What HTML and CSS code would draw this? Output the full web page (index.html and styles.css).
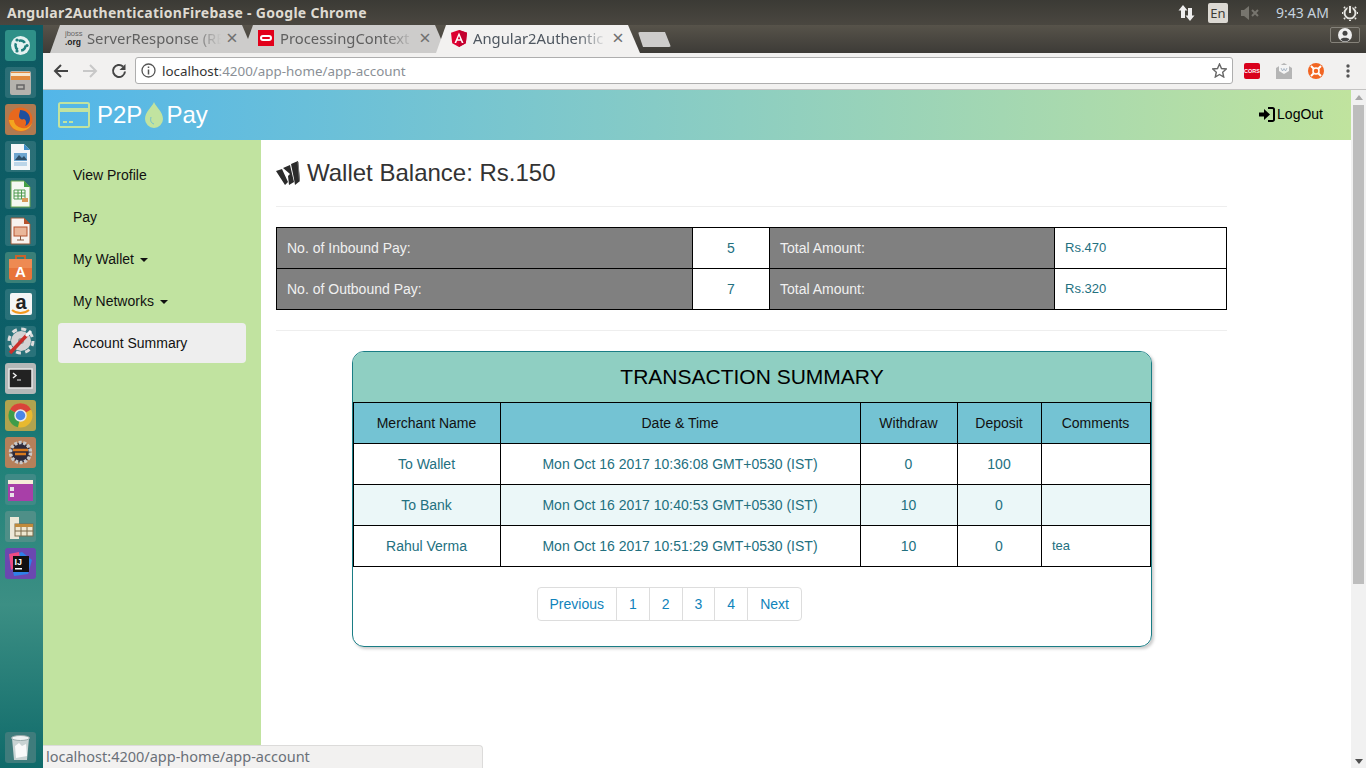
FILE: index.html
```html
<!DOCTYPE html>
<html lang="en">

<head>
    <meta charset="UTF-8">
    <meta name="viewport" content="width=device-width, initial-scale=1.0">
    <title>Angular2AuthenticationFirebase</title>
    <link rel="stylesheet" href="styles.css">
</head>

<body>
    <div class="top-panel">
        <span class="window-title">Angular2AuthenticationFirebase - Google Chrome</span>
        <div class="indicators">
            <svg class="ind-arrows" width="17" height="18" viewBox="0 0 17 18"><path d="M5 1l4.500 5.500H7V14H3V6.500H.5zM12 17l-4.500-5.500H10V4h4v7.500h2.500z" fill="#eee"/></svg>
            <span class="ind-lang">En</span>
            <svg class="ind-sound" width="18" height="14" viewBox="0 0 18 14"><path d="M0 4h3l5-4v14l-5-4H0z" fill="#77756e"/><path d="M11 4l6 6M17 4l-6 6" stroke="#77756e" stroke-width="2"/></svg>
            <span class="ind-time">9:43 AM</span>
            <svg class="ind-power" width="16" height="16" viewBox="0 0 16 16"><circle cx="8" cy="8" r="5.500" fill="none" stroke="#e6e6e2" stroke-width="2"/><path d="M8 0v8" stroke="#4a4740" stroke-width="5"/><path d="M8 1v7" stroke="#e6e6e2" stroke-width="2"/><path d="M1 8H0M16 8h-1M3 3L2 2M13 3l1-1M3 13l-1 1M13 13l1 1M8 16v-1" stroke="#e6e6e2" stroke-width="2"/></svg>
        </div>
    </div>

    <div class="desktop">
        <nav class="launcher">
            <div class="tile tile-home"><svg viewBox="0 0 31 31"><circle cx="15.500" cy="15.500" r="9.500" fill="#e4f1f0"/><circle cx="15.500" cy="15.500" r="5" fill="none" stroke="#1f7f7c" stroke-width="2.500" stroke-dasharray="7 3.500"/><circle cx="22" cy="15.500" r="1.600" fill="#1f7f7c"/><circle cx="12" cy="10" r="1.600" fill="#1f7f7c"/><circle cx="12" cy="21" r="1.600" fill="#1f7f7c"/></svg></div>
            <div class="tile tile-files"><svg viewBox="0 0 31 31"><rect x="5" y="4" width="21" height="24" rx="2" fill="#b4b2ad"/><rect x="6" y="5" width="19" height="8" fill="#e28b3d"/><rect x="6" y="6" width="19" height="3" fill="#f5e7cf"/><rect x="12" y="18" width="7" height="4" fill="none" stroke="#666" stroke-width="1.500"/></svg></div>
            <div class="tile tile-firefox"><svg viewBox="0 0 31 31"><circle cx="15.500" cy="15.500" r="12" fill="#e8681d"/><path d="M15 6c6 0 10 4 10 9 0 3-2 6-5 7 2-3 1-6-1-7-2 1-5 0-5-3 0-2 1-4 1-6z" fill="#1f4f9e"/><path d="M4 16c1 7 6 11 12 11s10-4 11-8c-2 4-6 6-10 5-5-1-8-4-8-8z" fill="#f4a51f"/></svg></div>
            <div class="tile tile-doc"><svg viewBox="0 0 31 31"><path d="M6 3h13l6 6v20H6z" fill="#f4f6f8"/><path d="M19 3l6 6h-6z" fill="#3f8fc9"/><rect x="9" y="12" width="13" height="8" fill="#6fa6cf"/><path d="M10 19l4-5 3 3 2-2 3 4z" fill="#2f4f66"/><rect x="9" y="21" width="13" height="4" fill="#bcd5e8"/></svg></div>
            <div class="tile tile-doc"><svg viewBox="0 0 31 31"><path d="M6 3h13l6 6v20H6z" fill="#f4f8f2" stroke="#6aa84f"/><path d="M19 3l6 6h-6z" fill="#43a047"/><path d="M9 12h11v9H9zM9 15h11M9 18h11M13 12v9M16.500 12v9" fill="none" stroke="#4f9a4f"/><rect x="17" y="20" width="6" height="4" fill="#d89a5b"/></svg></div>
            <div class="tile tile-doc"><svg viewBox="0 0 31 31"><path d="M6 3h13l6 6v20H6z" fill="#f8f2ee" stroke="#9a5a3a"/><path d="M19 3l6 6h-6z" fill="#b5532e"/><rect x="9" y="12" width="13" height="9" fill="#eab79a" stroke="#b5532e"/><path d="M15.500 21v4M12 25h7" stroke="#8a5a40"/></svg></div>
            <div class="tile tile-store"><svg viewBox="0 0 31 31"><path d="M11 7V4h9v3" fill="none" stroke="#c9622a" stroke-width="2"/><rect x="4" y="7" width="23" height="21" rx="2" fill="#e8743a"/><rect x="4" y="7" width="23" height="9" fill="#ee8a52"/><text x="15.500" y="25" class="tile-letter" fill="#fff">A</text></svg></div>
            <div class="tile tile-amazon"><svg viewBox="0 0 31 31"><rect x="5" y="4" width="22" height="22" rx="2" fill="#f5f5f5"/><text x="16" y="20" class="tile-letter-a" fill="#222">a</text><path d="M7 21c5 4 12 4 17 0" fill="none" stroke="#f39a1f" stroke-width="2"/></svg></div>
            <div class="tile tile-settings"><svg viewBox="0 0 31 31"><circle cx="16" cy="15" r="10" fill="#d4d4d4"/><circle cx="16" cy="15" r="12" fill="none" stroke="#dcdcdc" stroke-width="3" stroke-dasharray="5 4.400"/><circle cx="16" cy="15" r="3" fill="#8a9a9a"/><path d="M5 27L22 9" stroke="#c9302c" stroke-width="3.500"/><path d="M21 10l5-5" stroke="#f4f4f4" stroke-width="3"/></svg></div>
            <div class="tile tile-terminal"><svg viewBox="0 0 31 31"><rect x="4" y="6" width="23" height="19" fill="#222" stroke="#e8e8e8" stroke-width="1.500"/><path d="M8 10l3 2.500-3 2.500" fill="none" stroke="#eee" stroke-width="1.500"/><path d="M12 17h4" stroke="#aaa" stroke-width="1.500"/></svg></div>
            <div class="tile tile-chrome"><svg viewBox="0 0 31 31"><circle cx="15.500" cy="15.500" r="12" fill="#e8b92f"/><path d="M15.500 15.500L5 9.500A12 12 0 0 1 26 9.500z" fill="#d9433a"/><path d="M15.500 15.500L5 9.500A12 12 0 0 0 13 27.300z" fill="#3d9c4a"/><circle cx="15.500" cy="15.500" r="5.500" fill="#4a86e8" stroke="#e8e8e8" stroke-width="1.500"/></svg></div>
            <div class="tile tile-ide"><svg viewBox="0 0 31 31"><circle cx="15.500" cy="15.500" r="10" fill="#2e2a3a" stroke="#c8c8c8" stroke-width="3.500" stroke-dasharray="3 1.500"/><path d="M8 13h15M10 17h11" stroke="#d97a1e" stroke-width="2.500"/></svg></div>
            <div class="tile tile-window"><svg viewBox="0 0 31 31"><rect x="3" y="6" width="25" height="21" fill="#a83fa8"/><rect x="3" y="6" width="25" height="4" fill="#f5ecd8"/><rect x="5" y="13" width="4" height="4" fill="#e8e0e8"/><rect x="5" y="19" width="4" height="4" fill="#e8e0e8"/></svg></div>
            <div class="tile tile-table"><svg viewBox="0 0 31 31"><rect x="5" y="6" width="9" height="22" fill="#ece8d8"/><rect x="10" y="13" width="18" height="12" fill="#efe7d0" stroke="#7a6a4a"/><rect x="10" y="13" width="18" height="3" fill="#c08a3a"/><path d="M16 16v9M22 16v9M10 20h18" stroke="#7a6a4a"/></svg></div>
            <div class="tile tile-idea"><svg viewBox="0 0 31 31"><path d="M5 8l12-4 10 8-4 14-14 2z" fill="#2f7fe8"/><path d="M4 6l10-2 2 12-10 6z" fill="#ee4a84"/><rect x="8" y="8" width="16" height="16" fill="#111"/><text x="9.500" y="17" class="tile-ij" fill="#fff">IJ</text><rect x="10" y="20" width="7" height="1.500" fill="#fff"/></svg></div>
            <div class="launcher-spacer"></div>
            <div class="tile tile-trash"><svg viewBox="0 0 31 31"><path d="M7 6h17l-2 22H9z" fill="#c9d3d3"/><ellipse cx="15.500" cy="6" rx="9" ry="2.500" fill="#eef2f2" stroke="#9aa"/><path d="M10 14l4-3 3 3 4-2 1 12-11 2z" fill="#fafafa"/></svg></div>
        </nav>

        <div class="window">
            <div class="tabstrip">
                <div class="tab tab-first">
                    <span class="favicon favicon-jboss">jboss<b>.org</b></span>
                    <span class="tab-title">ServerResponse (RE</span>
                    <span class="tab-close">×</span>
                </div>
                <div class="tab tab-second">
                    <span class="favicon favicon-oracle"><i></i></span>
                    <span class="tab-title">ProcessingContext</span>
                    <span class="tab-close">×</span>
                </div>
                <div class="tab tab-active">
                    <svg class="favicon" width="16" height="17" viewBox="0 0 16 17"><path d="M8 0l8 2.800-1.200 10.500L8 17l-6.800-3.700L0 2.800z" fill="#dd0031"/><path d="M8 0l8 2.800-1.200 10.500L8 17z" fill="#c3002f"/><path d="M8 2.500L3.500 13h1.700l.9-2.300h3.800l.9 2.300h1.700zM8 6l1.300 3.300H6.700z" fill="#fff"/></svg>
                    <span class="tab-title">Angular2Authentic</span>
                    <span class="tab-close">×</span>
                </div>
                <div class="new-tab"></div>
                <div class="avatar-btn">
                    <svg width="14" height="14" viewBox="0 0 14 14"><circle cx="7" cy="7" r="7" fill="#eee"/><circle cx="7" cy="5.200" r="2.500" fill="#444"/><path d="M2.500 11.500c1-2.500 8-2.500 9 0a6 6 0 0 1-9 0z" fill="#444"/></svg>
                </div>
            </div>

            <div class="toolbar">
                <svg class="tool-btn" width="16" height="16" viewBox="0 0 16 16"><path d="M15 8H2M8 2L2 8l6 6" fill="none" stroke="#444" stroke-width="2"/></svg>
                <svg class="tool-btn" width="16" height="16" viewBox="0 0 16 16"><path d="M1 8h13M8 2l6 6-6 6" fill="none" stroke="#c8c8c8" stroke-width="2"/></svg>
                <svg class="tool-btn" width="16" height="16" viewBox="0 0 16 16"><path d="M14 8.500A6 6 0 1 1 12 3.500" fill="none" stroke="#444" stroke-width="2"/><path d="M14.500 1v6h-6z" fill="#444"/></svg>
                <div class="omnibox">
                    <svg width="15" height="15" viewBox="0 0 15 15"><circle cx="7.500" cy="7.500" r="6.500" fill="none" stroke="#555" stroke-width="1.300"/><path d="M7.500 6.500v5M7.500 3.500v1.500" stroke="#555" stroke-width="1.500"/></svg>
                    <span class="url"><span class="url-host">localhost</span>:4200/app-home/app-account</span>
                    <svg class="star" width="15" height="15" viewBox="0 0 15 15"><path d="M7.500 1l2 4.500 4.800.5-3.600 3.200 1 4.800-4.200-2.500L3.300 14l1-4.800L.7 6l4.800-.5z" fill="none" stroke="#666" stroke-width="1.400"/></svg>
                </div>
                <div class="extensions">
                    <span class="ext-cors">CORS</span>
                    <svg width="16" height="16" viewBox="0 0 16 16"><path d="M0 5l8-5 8 5v11H0z" fill="#b5b5b5"/><path d="M3 2h10v6l-5 3-5-3z" fill="#f4f4f4"/><path d="M5 5l1.500 3L8 5.500 9.500 8 11 5" fill="none" stroke="#9ab" stroke-width=".8"/></svg>
                    <svg width="16" height="16" viewBox="0 0 16 16"><circle cx="8" cy="8" r="8" fill="#f26522"/><circle cx="8" cy="8" r="3" fill="none" stroke="#fff" stroke-width="1.500"/><path d="M3 3l2.500 2.500M13 3l-2.500 2.500M3 13l2.500-2.500M13 13l-2.500-2.500" stroke="#fff" stroke-width="2"/></svg>
                    <svg class="ext-menu" width="4" height="14" viewBox="0 0 4 14"><circle cx="2" cy="2" r="1.700" fill="#555"/><circle cx="2" cy="7" r="1.700" fill="#555"/><circle cx="2" cy="12" r="1.700" fill="#555"/></svg>
                </div>
            </div>

            <div class="viewport">
                <div class="page">
                    <header class="navbar">
                        <div class="brand">
                            <svg width="32" height="26" viewBox="0 0 32 26"><rect x="1" y="1" width="30" height="24" rx="1.500" fill="none" stroke="#c1e3a0" stroke-width="2"/><rect x="1" y="6" width="30" height="4" fill="#c1e3a0"/><path d="M5 20h4M11 20h4" stroke="#c1e3a0" stroke-width="2"/></svg>
                            <span class="brand-p2p">P2P</span>
                            <svg width="18" height="27" viewBox="0 0 18 27"><path d="M9 0c2 5 9 10 9 17a9 9 0 0 1-18 0C0 10 7 5 9 0z" fill="#c1e3a0"/><path d="M6 15c-1 4 0 6 3 7" fill="none" stroke="#6fbfd0" stroke-width="1"/></svg>
                            <span class="brand-pay">Pay</span>
                        </div>
                        <a class="logout">
                            <svg width="16" height="15" viewBox="0 0 16 15"><path d="M9 1h4.500A1.500 1.500 0 0 1 15 2.500v10a1.500 1.500 0 0 1-1.500 1.500H9" fill="none" stroke="#000" stroke-width="2"/><path d="M0 5.500h5V2l6 5.500L5 13V9.500H0z" fill="#000"/></svg>
                            <span>LogOut</span>
                        </a>
                    </header>

                    <div class="page-body">
                        <aside class="sidebar">
                            <ul class="side-nav">
                                <li>View Profile</li>
                                <li>Pay</li>
                                <li>My Wallet <span class="caret"></span></li>
                                <li>My Networks <span class="caret"></span></li>
                                <li class="active">Account Summary</li>
                            </ul>
                        </aside>

                        <main class="content">
                            <h3 class="balance">
                                <svg width="24" height="24" viewBox="0 0 24 24"><path d="M0 10l6-2 6 13-3 3zM7 7l7-3 4 17-5 3-1-9 2-2zM15 3l7-3 2 20-5 4-1-6z" fill="#2b2b2b"/><path d="M22 1l1.500 19" stroke="#777" stroke-width="1"/></svg>
                                Wallet Balance: Rs.150
                            </h3>
                            <hr>
                            <table class="stats">
                                <colgroup>
                                    <col class="stat-a"><col class="stat-b"><col class="stat-c"><col class="stat-d">
                                </colgroup>
                                <tr>
                                    <th>No. of Inbound Pay:</th>
                                    <td class="stat-count">5</td>
                                    <th>Total Amount:</th>
                                    <td class="stat-amount">Rs.470</td>
                                </tr>
                                <tr>
                                    <th>No. of Outbound Pay:</th>
                                    <td class="stat-count">7</td>
                                    <th>Total Amount:</th>
                                    <td class="stat-amount">Rs.320</td>
                                </tr>
                            </table>
                            <hr>

                            <section class="summary">
                                <h4 class="summary-title">TRANSACTION SUMMARY</h4>
                                <table class="tx">
                                    <colgroup>
                                        <col class="tx-a"><col class="tx-b"><col class="tx-c"><col class="tx-d"><col class="tx-e">
                                    </colgroup>
                                    <thead>
                                        <tr>
                                            <th>Merchant Name</th>
                                            <th>Date &amp; Time</th>
                                            <th>Withdraw</th>
                                            <th>Deposit</th>
                                            <th>Comments</th>
                                        </tr>
                                    </thead>
                                    <tbody>
                                        <tr>
                                            <td>To Wallet</td>
                                            <td>Mon Oct 16 2017 10:36:08 GMT+0530 (IST)</td>
                                            <td>0</td>
                                            <td>100</td>
                                            <td class="tx-comment"></td>
                                        </tr>
                                        <tr class="odd">
                                            <td>To Bank</td>
                                            <td>Mon Oct 16 2017 10:40:53 GMT+0530 (IST)</td>
                                            <td>10</td>
                                            <td>0</td>
                                            <td class="tx-comment"></td>
                                        </tr>
                                        <tr>
                                            <td>Rahul Verma</td>
                                            <td>Mon Oct 16 2017 10:51:29 GMT+0530 (IST)</td>
                                            <td>10</td>
                                            <td>0</td>
                                            <td class="tx-comment">tea</td>
                                        </tr>
                                    </tbody>
                                </table>
                                <ul class="pagination">
                                    <li>Previous</li>
                                    <li>1</li>
                                    <li>2</li>
                                    <li>3</li>
                                    <li>4</li>
                                    <li>Next</li>
                                </ul>
                            </section>
                        </main>
                    </div>
                </div>

                <div class="scrollbar">
                    <span class="arrow-up"></span>
                    <div class="thumb"></div>
                    <span class="arrow-down"></span>
                </div>

                <div class="status-bubble">localhost:4200/app-home/app-account</div>
            </div>
        </div>
    </div>
</body>

</html>
```

FILE: styles.css
```css
html, body {
    margin: 0;
    height: 100%;
    overflow: hidden;
}

body {
    font-family: "Liberation Sans", Arial, sans-serif;
    font-size: 14px;
    color: #333;
    display: flex;
    flex-direction: column;
    background-color: #fff;
}

/* ubuntu top panel */
.top-panel {
    height: 25px;
    flex: none;
    display: flex;
    align-items: center;
    justify-content: space-between;
    background: linear-gradient(#3b3a35, #4a4740);
    font-family: "Noto Sans", sans-serif;
}

.window-title {
    margin-left: 7px;
    font-size: 14px;
    font-weight: 700;
    letter-spacing: 0.28px;
    color: #dfdbd2;
}

.indicators {
    display: flex;
    align-items: center;
}

.ind-arrows {
    margin-right: 13px;
}

.ind-lang {
    width: 20px;
    height: 20px;
    margin-right: 13px;
    border-radius: 2px;
    background-color: #dcd9d3;
    color: #3c3b37;
    font-size: 13px;
    line-height: 20px;
    text-align: center;
}

.ind-sound {
    margin-right: 17px;
}

.ind-time {
    margin-right: 13px;
    font-size: 14px;
    color: #c6d2de;
}

.ind-power {
    margin-right: 8px;
}

.desktop {
    flex: 1;
    min-height: 0;
    display: flex;
}

/* launcher */
.launcher {
    width: 43px;
    flex: none;
    box-sizing: border-box;
    padding: 5px 0 5px 5px;
    display: flex;
    flex-direction: column;
    gap: 6px;
    background: linear-gradient(#0e5a62 0%, #0c5f68 45%, #1f8078 58%, #3c8f84 78%, #0f6a6a 100%);
}

.launcher-spacer {
    flex: 1;
}

.tile {
    width: 31px;
    height: 31px;
    border-radius: 3px;
    background-color: rgba(255, 255, 255, 0.12);
}

.tile svg {
    display: block;
    width: 31px;
    height: 31px;
}

.tile-home {
    background-color: #2f9088;
}

.tile-firefox {
    background-color: #b07a50;
}

.tile-store {
    background-color: #3a8078;
}

.tile-terminal {
    background-color: #b5b8b8;
}

.tile-chrome {
    background-color: #b0a34f;
}

.tile-ide {
    background-color: #b5805a;
}

.tile-window {
    background-color: #3f8a86;
}

.tile-table {
    background-color: #4f8f88;
}

.tile-idea {
    background-color: #6a48b0;
}

.tile-trash {
    background-color: #3f7c7c;
}

.tile-letter {
    font-family: "Liberation Sans", sans-serif;
    font-size: 15px;
    font-weight: 700;
    text-anchor: middle;
}

.tile-letter-a {
    font-family: "Liberation Sans", sans-serif;
    font-size: 20px;
    font-weight: 700;
    text-anchor: middle;
}

.tile-ij {
    font-family: "Liberation Sans", sans-serif;
    font-size: 9px;
    font-weight: 700;
}

/* chrome */
.window {
    flex: 1;
    min-width: 0;
    display: flex;
    flex-direction: column;
    font-family: "Noto Sans", sans-serif;
}

.tabstrip {
    height: 28px;
    flex: none;
    padding-left: 7px;
    display: flex;
    align-items: flex-end;
    background: linear-gradient(#57534a, #3d3b37);
}

.tab {
    width: 204px;
    height: 28px;
    flex: none;
    box-sizing: border-box;
    margin-right: -11px;
    padding: 0 14px 2px 15px;
    display: flex;
    align-items: center;
    background-color: #cdcccb;
    clip-path: polygon(0 100%, 10px 0, 192px 0, 100% 100%);
    position: relative;
}

.tab-first {
    z-index: 2;
}

.tab-second {
    z-index: 1;
}

.tab-active {
    z-index: 3;
    background-color: #f2f1f0;
}

.favicon {
    flex: none;
    width: 16px;
    margin-right: 6px;
}

.favicon-jboss {
    font-family: "Liberation Sans", sans-serif;
    font-size: 7.500px;
    line-height: 8px;
    color: #666;
    text-align: center;
}

.favicon-jboss b {
    display: block;
    font-size: 8.500px;
    color: #222;
}

.favicon-oracle {
    height: 16px;
    background-color: #e2001a;
    display: flex;
    align-items: center;
    justify-content: center;
}

.favicon-oracle i {
    width: 12px;
    height: 6px;
    box-sizing: border-box;
    border: 2px solid #fff;
    border-radius: 3px;
}

.tab-title {
    flex: 1;
    min-width: 0;
    white-space: nowrap;
    font-size: 14.800px;
    color: #5f5f5f;
    -webkit-mask-image: linear-gradient(to right, #000 76%, transparent 98%);
    mask-image: linear-gradient(to right, #000 76%, transparent 98%);
}

.tab-active .tab-title {
    color: #4f5760;
}

.tab-close {
    flex: none;
    width: 16px;
    font-size: 20px;
    line-height: 20px;
    text-align: center;
    color: #707070;
}

.new-tab {
    width: 33px;
    height: 15px;
    flex: none;
    margin: 0 0 6px 9px;
    background-color: #cdcccb;
    clip-path: polygon(0 0, 27px 0, 100% 100%, 5px 100%);
    border-radius: 2px;
}

.avatar-btn {
    width: 30px;
    height: 16px;
    box-sizing: border-box;
    margin: 0 6px 10px auto;
    border: 1px solid #85827a;
    border-radius: 2px;
    display: flex;
    align-items: center;
    justify-content: center;
}

.toolbar {
    height: 37px;
    flex: none;
    box-sizing: border-box;
    padding: 0 0 1px 10px;
    display: flex;
    align-items: center;
    background-color: #f2f1f0;
    border-bottom: 1px solid #c4c3c2;
}

.tool-btn {
    flex: none;
    margin-right: 13px;
}

.tool-btn + .omnibox {
    margin-left: -5px;
}

.omnibox {
    width: 1098px;
    height: 27px;
    flex: none;
    box-sizing: border-box;
    padding: 0 5px;
    display: flex;
    align-items: center;
    background-color: #fff;
    border: 1px solid #aeaeae;
    border-radius: 3px;
}

.url {
    flex: 1;
    margin-left: 6px;
    font-size: 13.400px;
    color: #8a8f96;
}

.url-host {
    color: #333;
}

.star {
    margin-right: 0;
}

.extensions {
    flex: 1;
    margin-left: 11px;
    display: flex;
    align-items: center;
    gap: 16px;
}

.ext-cors {
    width: 16px;
    height: 16px;
    border-radius: 2px;
    background-color: #d9001b;
    color: #fff;
    font-family: "Liberation Sans", sans-serif;
    font-size: 5.500px;
    font-weight: 700;
    line-height: 16px;
    text-align: center;
}

.ext-menu {
    margin-left: 6px;
}

.viewport {
    flex: 1;
    min-height: 0;
    display: flex;
    position: relative;
}

/* page */
.page {
    flex: 1;
    min-width: 0;
    display: flex;
    flex-direction: column;
    font-family: "Liberation Sans", Arial, sans-serif;
}

.navbar {
    height: 50px;
    flex: none;
    box-sizing: border-box;
    padding: 0 28px 0 15px;
    display: flex;
    align-items: center;
    justify-content: space-between;
    background: linear-gradient(to right, #53b6e9, #c0e39e);
}

.brand {
    display: flex;
    align-items: center;
    font-size: 24px;
    color: #fff;
}

.brand-p2p {
    margin-left: 7px;
    margin-right: 3px;
}

.brand-pay {
    margin-left: 3px;
}

.logout {
    display: flex;
    align-items: center;
    gap: 2px;
    margin-bottom: 2px;
    color: #000;
}

.page-body {
    flex: 1;
    min-height: 0;
    display: flex;
}

.sidebar {
    width: 218px;
    flex: none;
    box-sizing: border-box;
    padding: 15px;
    background-color: #c1e3a0;
}

.side-nav {
    list-style: none;
    margin: 0;
    padding: 0;
    display: flex;
    flex-direction: column;
    gap: 2px;
}

.side-nav li {
    padding: 10px 15px;
    line-height: 20px;
    border-radius: 4px;
    color: #111;
}

.side-nav .active {
    background-color: #eee;
}

.caret {
    display: inline-block;
    margin-left: 2px;
    vertical-align: middle;
    border-top: 4px solid #111;
    border-left: 4px solid transparent;
    border-right: 4px solid transparent;
}

.content {
    width: 951px;
    flex: none;
    padding: 20px 0 0 15px;
}

.balance {
    margin: 0;
    height: 26px;
    display: flex;
    align-items: center;
    gap: 7px;
    font-size: 24px;
    font-weight: 400;
    color: #333;
}

.content hr {
    margin: 20px 0;
    border: 0;
    border-top: 1px solid #eee;
}

.stats,
.tx {
    table-layout: fixed;
    border-collapse: collapse;
}

.stats {
    width: 950px;
}

.stat-a { width: 416px; }
.stat-b { width: 77px; }
.stat-c { width: 285px; }
.stat-d { width: 172px; }

.stats tr,
.tx tr {
    height: 41px;
}

.stats th,
.stats td,
.tx th,
.tx td {
    border: 1px solid #000;
    padding: 0 10px;
}

.tx th,
.tx td {
    padding-right: 11px;
}

.stats th {
    background-color: #808080;
    color: #f0f0f0;
    font-weight: 400;
    text-align: left;
}

.stat-count {
    text-align: center;
    color: #23707f;
}

.stats .stat-amount {
    padding-bottom: 2px;
    font-size: 13px;
    color: #23707f;
}

.summary {
    width: 800px;
    height: 296px;
    box-sizing: border-box;
    margin-left: 76px;
    border: 1px solid #1a7d85;
    border-radius: 12px;
    box-shadow: 2px 2px 3px #ccc;
    overflow: hidden;
}

.summary-title {
    margin: 0;
    height: 50px;
    background-color: #8fcfc2;
    color: #000;
    font-size: 21px;
    font-weight: 400;
    line-height: 50px;
    text-align: center;
}

.tx {
    width: 797px;
}

.tx-a { width: 147px; }
.tx-b { width: 360px; }
.tx-c { width: 97px; }
.tx-d { width: 84px; }
.tx-e { width: 109px; }

.tx th {
    background-color: #74c3d3;
    color: #111;
    font-weight: 400;
    text-align: center;
}

.tx td {
    text-align: center;
    color: #23707f;
}

.tx .odd td {
    background-color: #ebf7f8;
}

.tx .tx-comment {
    padding-bottom: 2px;
    font-size: 13px;
    text-align: left;
}

.pagination {
    list-style: none;
    margin: 20px 0 0 184.500px;
    padding: 0;
    display: inline-flex;
    color: #1083bb;
}

.pagination li {
    margin-left: -1px;
    padding: 6px 12px;
    line-height: 20px;
    border: 1px solid #ddd;
    background-color: #fff;
}

.pagination li:first-child {
    border-radius: 4px 0 0 4px;
}

.pagination li:last-child {
    border-radius: 0 4px 4px 0;
}

.scrollbar {
    width: 15px;
    flex: none;
    box-sizing: border-box;
    padding-bottom: 4px;
    display: flex;
    flex-direction: column;
    align-items: center;
    background-color: #f1f1f1;
}

.arrow-up {
    margin-top: 5px;
    border-bottom: 5px solid #a8a8a8;
    border-left: 4px solid transparent;
    border-right: 4px solid transparent;
}

.thumb {
    width: 11px;
    height: 479px;
    margin-top: 5px;
    background-color: #bdbdbd;
}

.arrow-down {
    margin-top: auto;
    border-top: 5px solid #505050;
    border-left: 4px solid transparent;
    border-right: 4px solid transparent;
}

.status-bubble {
    position: absolute;
    left: 0;
    bottom: 0;
    width: 440px;
    height: 23px;
    box-sizing: border-box;
    padding-left: 3px;
    background-color: #f2f1f0;
    border-top: 1px solid #dcdbda;
    border-right: 1px solid #dcdbda;
    border-top-right-radius: 4px;
    color: #6a7078;
    font-family: "Noto Sans", sans-serif;
    font-size: 14.500px;
    line-height: 20px;
}
```
